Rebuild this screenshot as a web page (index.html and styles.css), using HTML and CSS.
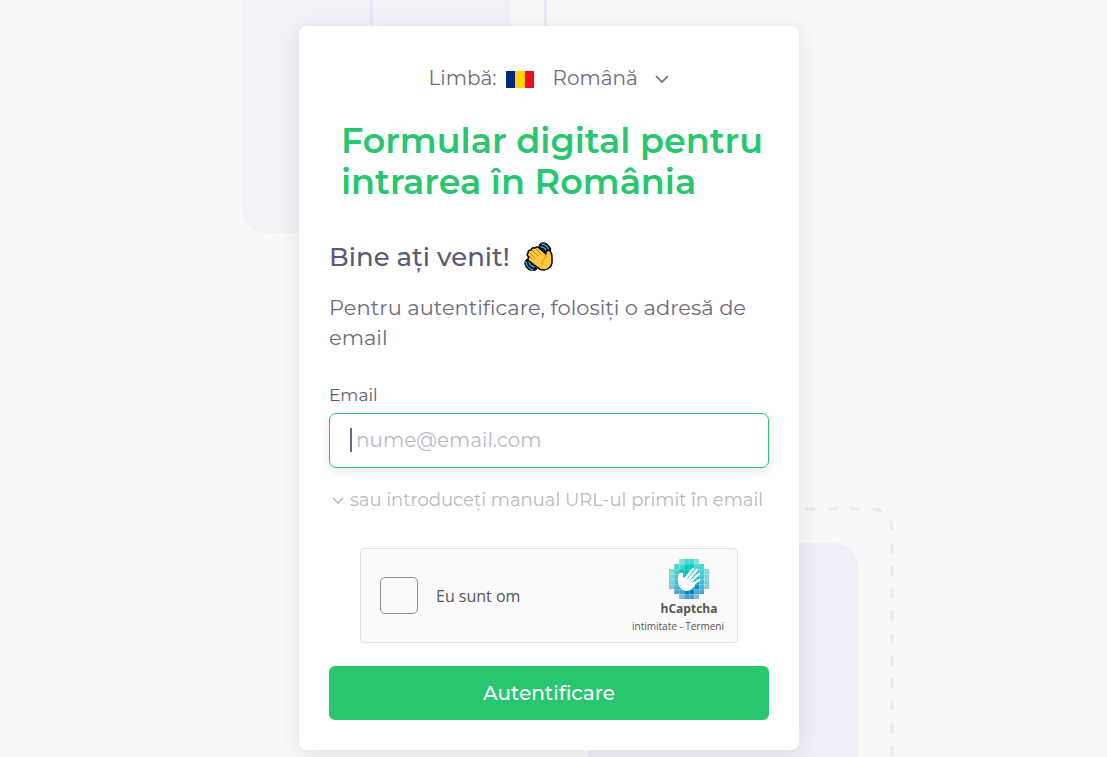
FILE: index.html
```html
<!DOCTYPE html>
<html lang="ro">
<head>
    <meta charset="UTF-8">
    <meta name="viewport" content="width=device-width, initial-scale=1.0">
    <title>Formular digital pentru intrarea în România</title>
    <link rel="stylesheet" href="styles.css">
</head>
<body>
    <main class="auth-wrapper">
        <!-- background shapes -->
        <div class="decor decor-top"></div>
        <div class="decor decor-top-line"></div>
        <div class="decor decor-bottom"></div>
        <svg class="decor decor-dashes" width="200" height="251" viewBox="0 0 200 251" fill="none" stroke="#e9e7f8" stroke-width="3">
            <path d="M101 3H166Q188 3 188 26V251" stroke-dasharray="10 12.5"/>
        </svg>

        <div class="card">
            <div class="language">
                <label for="language">Limbă:</label>
                <svg class="flag" width="28" height="17" viewBox="0 0 28 17">
                    <path fill="#00267f" d="M0 0h10v17H0z"/>
                    <path fill="#ffd200" d="M9 0h10v17H9z"/>
                    <path fill="#f30b25" d="M19 0h9v17h-9z"/>
                </svg>
                <select id="language" name="language">
                    <option selected>Română</option>
                </select>
                <svg class="chevron" width="14" height="8" viewBox="0 0 14 8" fill="none" stroke="#6e6b7b" stroke-width="1.700"><path d="M1 1l6 6 6-6"/></svg>
            </div>

            <h1>Formular digital pentru intrarea în România</h1>

            <h2>
                Bine ați venit!
                <svg width="30" height="30" viewBox="0 0 30 30" stroke-linecap="round" stroke-linejoin="round">
                    <path d="M15 5C15 0 19 0 23 2C27 5 28 9 25 12L20 10Z" fill="#000" stroke="#000" stroke-width="1"/>
                    <path d="M18 2Q24 3 25 9M17 5Q21 5 22 9" fill="none" stroke="#2aa9cb" stroke-width="1.500"/>
                    <path d="M3 17C0 19 0 24 4 27C7 29 11 29 13 27L9 21Z" fill="#000" stroke="#000" stroke-width="1"/>
                    <path d="M2 20Q3 26 9 28M5 20Q6 24 10 25" fill="none" stroke="#2aa9cb" stroke-width="1.500"/>
                    <path d="M11 6Q13 4 15 6L22 12L22 10Q23 7 26 9Q28 11 28 16V21Q27 27 20 28Q16 28 13 25L5 19Q3 17 5 15Q2 13 4 11Q4 8 7 8Q8 5 11 6Z" fill="#ffc83d" stroke="#000" stroke-width="1.500"/>
                    <path d="M6 15L9 17M6 11L11 16M8 8L14 14M12 7L17 12M22 12Q23 15 20 17Q17 19 18 22" fill="none" stroke="#a8751b" stroke-width=".8"/>
                </svg>
            </h2>
            <p class="intro">Pentru autentificare, folosiți o adresă de email</p>

            <form>
                <label class="email-label" for="email">Email</label>
                <div class="email-field">
                    <input type="email" id="email" name="email" placeholder="nume@email.com">
                    <span class="caret"></span>
                </div>

                <button type="button" class="manual">
                    <svg width="12" height="7" viewBox="0 0 12 7" fill="none" stroke="currentColor" stroke-width="1.500"><path d="M1 1l5 5 5-5"/></svg>
                    sau introduceți manual URL-ul primit în email
                </button>

                <div class="captcha">
                    <input type="checkbox" id="human" name="human">
                    <label for="human">Eu sunt om</label>
                    <div class="captcha-brand">
                        <svg width="42" height="42" viewBox="0 0 42 42">
                            <defs>
                                <linearGradient id="sea" gradientUnits="userSpaceOnUse" x1="0" y1="0" x2="0" y2="40">
                                    <stop offset="0" stop-color="#00d4b8"/>
                                    <stop offset=".35" stop-color="#00c0bf"/>
                                    <stop offset=".65" stop-color="#009fc5"/>
                                    <stop offset="1" stop-color="#0077bf"/>
                                </linearGradient>
                            </defs>
                            <g fill="url(#sea)">
                                <path opacity=".5" d="M11 1h5v5h-5zM26 1h5v5h-5zM1 11h5v20H1zM36 11h5v20h-5zM11 36h5v5h-5zM26 36h5v5h-5z"/>
                                <path opacity=".72" d="M16 1h10v5H16zM6 6h10v5H6zM26 6h10v5H26zM6 11h5v20H6zM31 11h5v20h-5zM6 31h10v5H6zM26 31h10v5H26zM16 36h10v5H16z"/>
                                <path d="M16 6h10v5h5v20h-5v5H16v-5h-5V11h5z"/>
                            </g>
                            <path d="M6.500 6v30M11.500 1v40M16.500 1v40M21.500 1v40M26.500 1v40M31.500 1v40M36.500 6v30M11 6.500h20M6 11.500h30M1 16.500h40M1 21.500h40M1 26.500h40M6 31.500h30M11 36.500h20" stroke="#fff" stroke-opacity=".2"/>
                            <path d="M10 24Q9 17 12 15Q16 13 15 19L18 20L28 25Q25 33 18 33Q11 32 10 24Z" fill="#fff"/>
                            <path d="M17 21L25 11M20 22L29 12M22 24L31 16M24 27L31 22" stroke="#fff" stroke-width="2.600" stroke-linecap="round"/>
                        </svg>
                        <strong>hCaptcha</strong>
                        <small><a href="#">intimitate</a> - <a href="#">Termeni</a></small>
                    </div>
                </div>

                <button type="submit" class="submit">Autentificare</button>
            </form>
        </div>
    </main>
</body>
</html>
```

FILE: styles.css
```css
* { box-sizing: border-box; }
body { margin: 0; min-height: 100vh; padding: 26px 9px 7px 0; overflow-x: hidden; background-color: #f8f8f8; color: #6e6b7b; font-family: Montserrat, Inter, sans-serif; font-weight: 400; }
.auth-wrapper { position: relative; max-width: 500px; margin: 0 auto; }
.card { position: relative; padding: 36px 30px 30px; background: white; border-radius: 8px; box-shadow: 0 4px 24px rgba(34,41,47,0.1); }

.decor { position: absolute; }
.decor-top { left: -57px; top: -26px; width: 269px; height: 233px; background: #f2f1f8; border-radius: 0 0 24px 24px; }
.decor-top-line { left: 71px; top: -26px; width: 177px; height: 60px; border: 3px solid #e9e7f8; border-width: 0 3px; }
.decor-bottom { right: -59px; bottom: -7px; width: 270px; height: 214px; background: #efeff9; border-radius: 24px 24px 0 0; }
.decor-dashes { right: -105px; bottom: -7px; }

.language { display: flex; justify-content: center; align-items: center; height: 32px; font-size: 20px; }
.flag { margin: 2px 18px 0 10px; }
.language select { appearance: none; border: 0; padding: 0; margin: 0; background: none; color: inherit; font: inherit; }
.chevron { margin: 2px 0 0 17px; }

h1 { margin: 26px 0 0 12px; color: #28c76f; font-size: 35px; line-height: 41px; font-weight: 600; }
h2 { display: flex; align-items: center; gap: 14px; margin: 39px 0 0; height: 32px; color: #5e5873; font-size: 26px; line-height: 32px; font-weight: 500; }
.intro { margin: 20px 0 0; font-size: 21px; line-height: 30px; }

.email-label { display: block; margin-top: 32px; font-size: 17px; line-height: 20px; color: #5e5873; }
.email-field { position: relative; margin-top: 8px; }
.email-field input { display: block; width: 100%; height: 55px; padding: 0 20px 2px 26px; border: 1px solid #28c76f; border-radius: 7px; outline: 0; box-shadow: 0 3px 10px rgba(34,41,47,0.1); color: #6e6b7b; font: inherit; font-size: 20px; }
.email-field input::placeholder { color: #b9b9c3; opacity: 1; }
.caret { position: absolute; left: 21px; top: 15px; width: 2px; height: 24px; background: #6e6b7b; }

.manual { display: flex; align-items: center; gap: 6px; margin-top: 20px; padding: 0 0 0 3px; border: 0; background: none; color: #b9b9c3; font: inherit; font-size: 18px; line-height: 24px; white-space: nowrap; cursor: pointer; }

.captcha { display: flex; align-items: center; max-width: 378px; height: 95px; margin: 36px auto 0; padding: 0 13px 0 19px; background: #fafafa; border: 1px solid #e0e0e0; border-radius: 4px; color: #555; font-family: "Open Sans", sans-serif; font-weight: 400; }
.captcha input { appearance: none; width: 38px; height: 37px; margin: 0; background: #fafafa; border: 1px solid #919191; border-radius: 5px; cursor: pointer; }
.captcha label { margin-left: 18px; font-size: 16px; }
.captcha-brand { display: flex; flex-direction: column; align-items: center; margin-left: auto; }
.captcha-brand svg,
.captcha-brand strong { margin-right: -22px; }
.captcha-brand strong { font-size: 12px; line-height: 18px; }
.captcha-brand small { font-size: 10px; line-height: 16px; }
.captcha-brand a { color: inherit; text-decoration: none; }

.submit { display: block; width: 100%; height: 54px; margin-top: 23px; border: 0; border-radius: 6px; background-color: #28c76f; color: white; font: inherit; font-size: 20px; font-weight: 500; cursor: pointer; }
```
